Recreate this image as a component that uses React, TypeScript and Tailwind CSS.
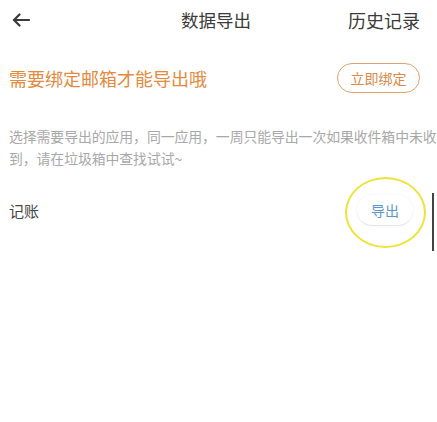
export default function App() {
  return (
    <div
      className="relative w-[437px] h-[422px] overflow-hidden bg-white text-[#333]"
      style={{ fontFamily: '"Noto Sans CJK SC", "Noto Sans", sans-serif' }}
    >
      {/* top bar */}
      <div className="grid h-[40px] grid-cols-[1fr_auto_1fr] items-center pl-[12px] pr-[17px]">
        <svg width="18" height="14" viewBox="0 0 18 14" fill="none" stroke="#3a3a3a" strokeWidth="2.2" strokeLinecap="round" strokeLinejoin="round">
          <path d="M17 7H2" />
          <path d="M7.5 1.5L2 7l5.5 5.5" />
        </svg>
        <div className="text-[17.5px] leading-none text-[#3a3a3a]">数据导出</div>
        <div className="justify-self-end text-[18px] leading-none text-[#3a3a3a]">历史记录</div>
      </div>

      {/* bind email */}
      <div className="mt-[23px] flex items-center justify-between pl-[9px] pr-[17px]">
        <div className="text-[18px] leading-none text-[#e38a3e]">需要绑定邮箱才能导出哦</div>
        <button className="flex h-[30px] w-[83px] items-center justify-center rounded-full border-[1.5px] border-[#e0a26e] text-[14px] text-[#d98a4a]">
          立即绑定
        </button>
      </div>

      {/* tip */}
      <p className="mt-[32px] pl-[9px] pr-0 text-[13.9px] leading-[22px] tracking-[-0.1px] text-[#a8a8a8]">
        选择需要导出的应用，同一应用，一周只能导出一次如果收件箱中未收到，请在垃圾箱中查找试试~
      </p>

      {/* app row */}
      <div className="mt-[26px] flex items-center justify-between pl-[9px] pr-[24px]">
        <div className="text-[15px] leading-none text-[#444]">记账</div>
        <button className="flex h-[31px] w-[56px] items-center justify-center rounded-full border-b border-[#e4e8ee] bg-white text-[14px] text-[#5b95c9] shadow-[0_0_3px_rgba(0,0,0,0.06)]">
          导出
        </button>
      </div>

      {/* highlight circle */}
      <div className="pointer-events-none absolute left-[345px] top-[177px] h-[71px] w-[81px] rounded-[50%] border-[2.5px] border-[#efe23a]" />
      {/* edge mark */}
      <div className="absolute left-[432px] top-[193px] h-[58px] w-[2px] bg-[#444]" />
    </div>
  );
}
